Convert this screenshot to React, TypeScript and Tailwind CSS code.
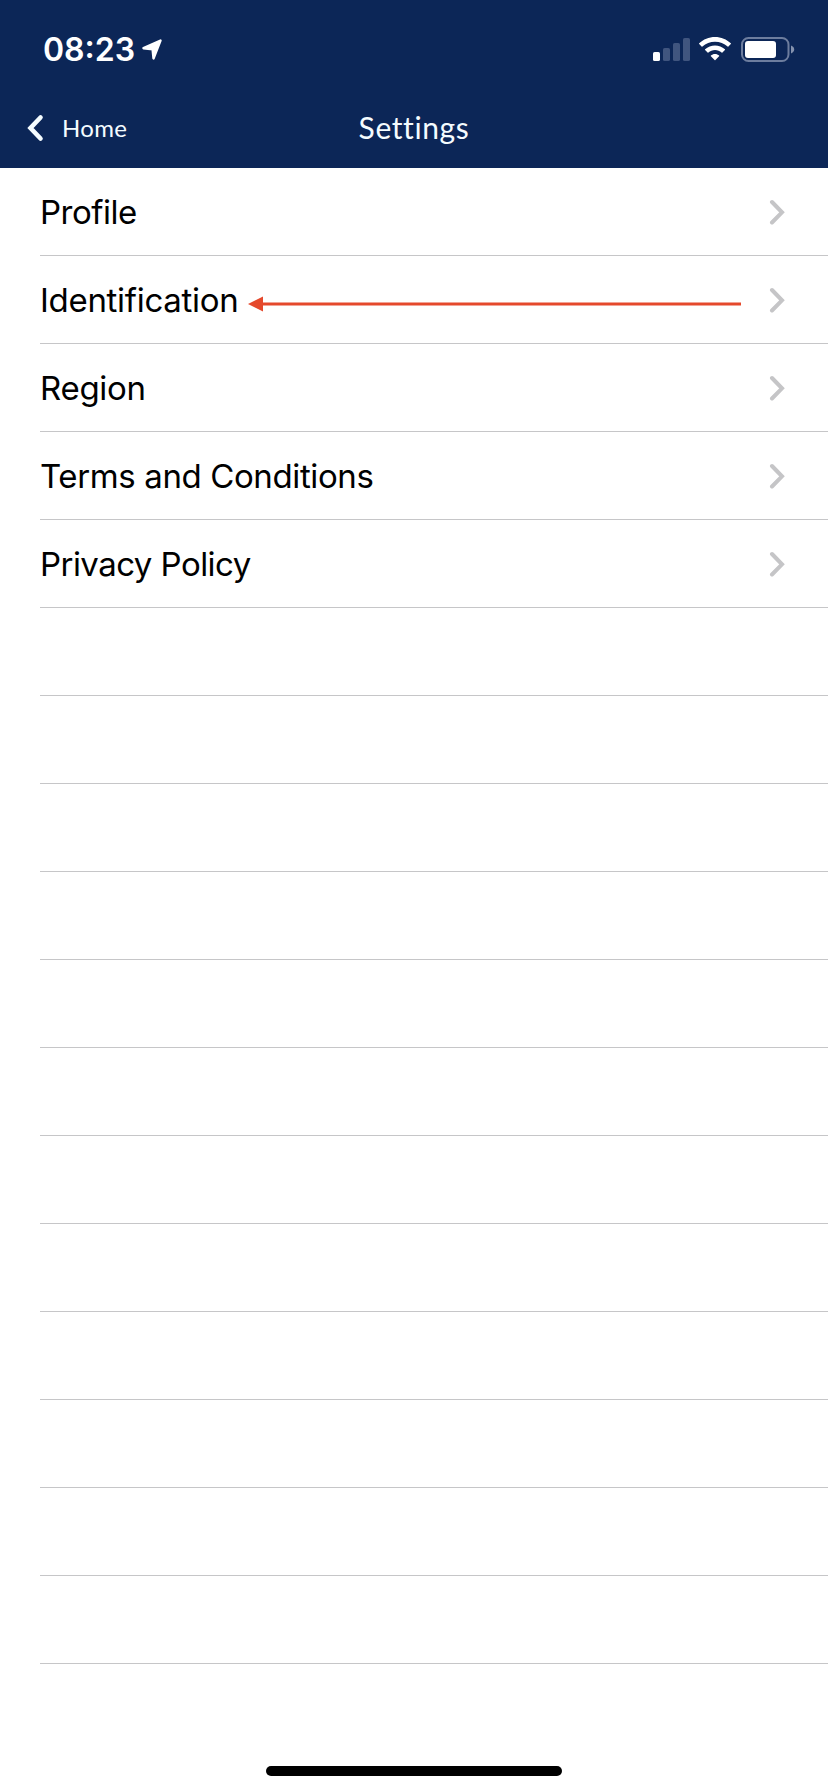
interface SettingsItem {
  label: string;
  tracking: string;
  highlighted?: boolean;
}

const items: SettingsItem[] = [
  { label: "Profile", tracking: "tracking-[-0.5px]" },
  { label: "Identification", tracking: "tracking-[-0.3px]", highlighted: true },
  { label: "Region", tracking: "tracking-[-0.3px]" },
  { label: "Terms and Conditions", tracking: "tracking-[-0.38px]" },
  { label: "Privacy Policy", tracking: "tracking-[-0.55px]" },
];

const TOTAL_ROWS = 17;

function StatusBar() {
  return (
    <div className="flex h-[100px] items-start justify-between pt-[36px] pr-[33px] pl-[43px]">
      <div className="flex items-start">
        <span className="w-[98px] font-['Inter',sans-serif] text-[32px] leading-[27px] font-semibold whitespace-nowrap">
          08:23
        </span>
        <svg width="22" height="22" viewBox="0 0 22 22" className="mt-[3px]">
          <path
            d="M2.5 9.2 19.5 1.5 12.5 19.5 11.6 10.4Z"
            fill="white"
            stroke="white"
            strokeWidth="2.4"
            strokeLinejoin="round"
          />
        </svg>
      </div>
      <div className="flex items-start">
        <svg width="38" height="26" viewBox="0 0 38 26">
          <rect x="0" y="16" width="7" height="9" rx="1.6" fill="white" />
          <g fill="#40557f">
            <rect x="10" y="12" width="7" height="13" rx="1.6" />
            <rect x="20" y="7" width="7" height="18" rx="1.6" />
            <rect x="30" y="2" width="7" height="23" rx="1.6" />
          </g>
        </svg>
        <svg width="32" height="26" viewBox="0 0 32 26" className="ml-2" fill="white">
          <path d="M16 1C22.1 1 27.7 3.3 31.8 7.3Q32.2 7.7 31.8 8.1L29.4 10.5Q29 10.9 28.6 10.5C25.2 7.4 20.8 5.7 16 5.7S6.8 7.4 3.4 10.5Q3 10.9 2.6 10.5L.2 8.1Q-.2 7.7 .2 7.3C4.3 3.3 9.9 1 16 1Z" />
          <path d="M16 9.5C19.7 9.5 23.2 10.9 25.9 13.3Q26.3 13.7 25.9 14.1L23.4 16.6Q23 17 22.6 16.6C20.8 15 18.5 14.1 16 14.1S11.2 15 9.4 16.6Q9 17 8.6 16.6L6.1 14.1Q5.7 13.7 6.1 13.3C8.8 10.9 12.3 9.5 16 9.5Z" />
          <path d="M16 17.9C17.6 17.9 19 18.5 20.1 19.4Q20.5 19.8 20.1 20.2L16.4 24.1Q16 24.5 15.6 24.1L11.9 20.2Q11.5 19.8 11.9 19.4C13 18.5 14.4 17.9 16 17.9Z" />
        </svg>
        <svg width="54" height="27" viewBox="0 0 54 27" className="ml-[10px]">
          <rect x="1" y="2" width="46.5" height="23" rx="6.5" fill="none" stroke="#6d7d9e" strokeWidth="2" />
          <rect x="4" y="5" width="31" height="17" rx="3" fill="white" />
          <path d="M50 9.5C52 10.2 53.2 11.8 53.2 13.5S52 16.8 50 17.5Z" fill="#8592ae" />
        </svg>
      </div>
    </div>
  );
}

function NavBar() {
  return (
    <div className="grid h-[68px] grid-cols-[1fr_auto_1fr] items-start font-['Lato',sans-serif] text-[#f5fcff]">
      <button className="flex items-start pt-[14px] pl-[26px]">
        <svg width="18" height="28" viewBox="0 0 18 28">
          <path d="M14.5 3.5 4.5 14 14.5 24.5" fill="none" stroke="currentColor" strokeWidth="4.6" strokeLinecap="round" />
        </svg>
        <span className="ml-[18px] text-[24px] leading-[27px] tracking-[0.3px]">Home</span>
      </button>
      <h1 className="pt-[7px] text-[30px] leading-[40px] tracking-[0.6px]">Settings</h1>
    </div>
  );
}

function SettingsRow({ item }: { item?: SettingsItem }) {
  return (
    <li className="ml-10 flex h-[88px] items-center border-b border-[#c6c6c8]">
      {item && (
        <>
          <span className={`text-[33px] leading-[40px] whitespace-nowrap ${item.tracking}`}>{item.label}</span>
          {item.highlighted && (
            <svg width="494" height="16" viewBox="0 0 494 16" className="mt-[8px] ml-[10px]">
              <path d="M13 8H493" stroke="#e5492c" strokeWidth="3" />
              <path d="M0 8 15 .5V15.5Z" fill="#e5492c" />
            </svg>
          )}
          <svg width="16" height="26" viewBox="0 0 16 26" className="mr-[43px] ml-auto">
            <path d="M3 3 13 13.3 3 23.5" fill="none" stroke="#c5c5c7" strokeWidth="4" strokeLinecap="round" />
          </svg>
        </>
      )}
    </li>
  );
}

export default function App() {
  return (
    <div className="flex h-[1792px] w-[828px] flex-col bg-white font-['Inter',sans-serif] text-black">
      <header className="h-[168px] bg-[#0c2657] text-white">
        <StatusBar />
        <NavBar />
      </header>
      <ul>
        {Array.from({ length: TOTAL_ROWS }, (_, i) => (
          <SettingsRow key={i} item={items[i]} />
        ))}
      </ul>
      <div className="mx-auto mt-auto mb-4 h-[10px] w-[296px] rounded-full bg-black" />
    </div>
  );
}
